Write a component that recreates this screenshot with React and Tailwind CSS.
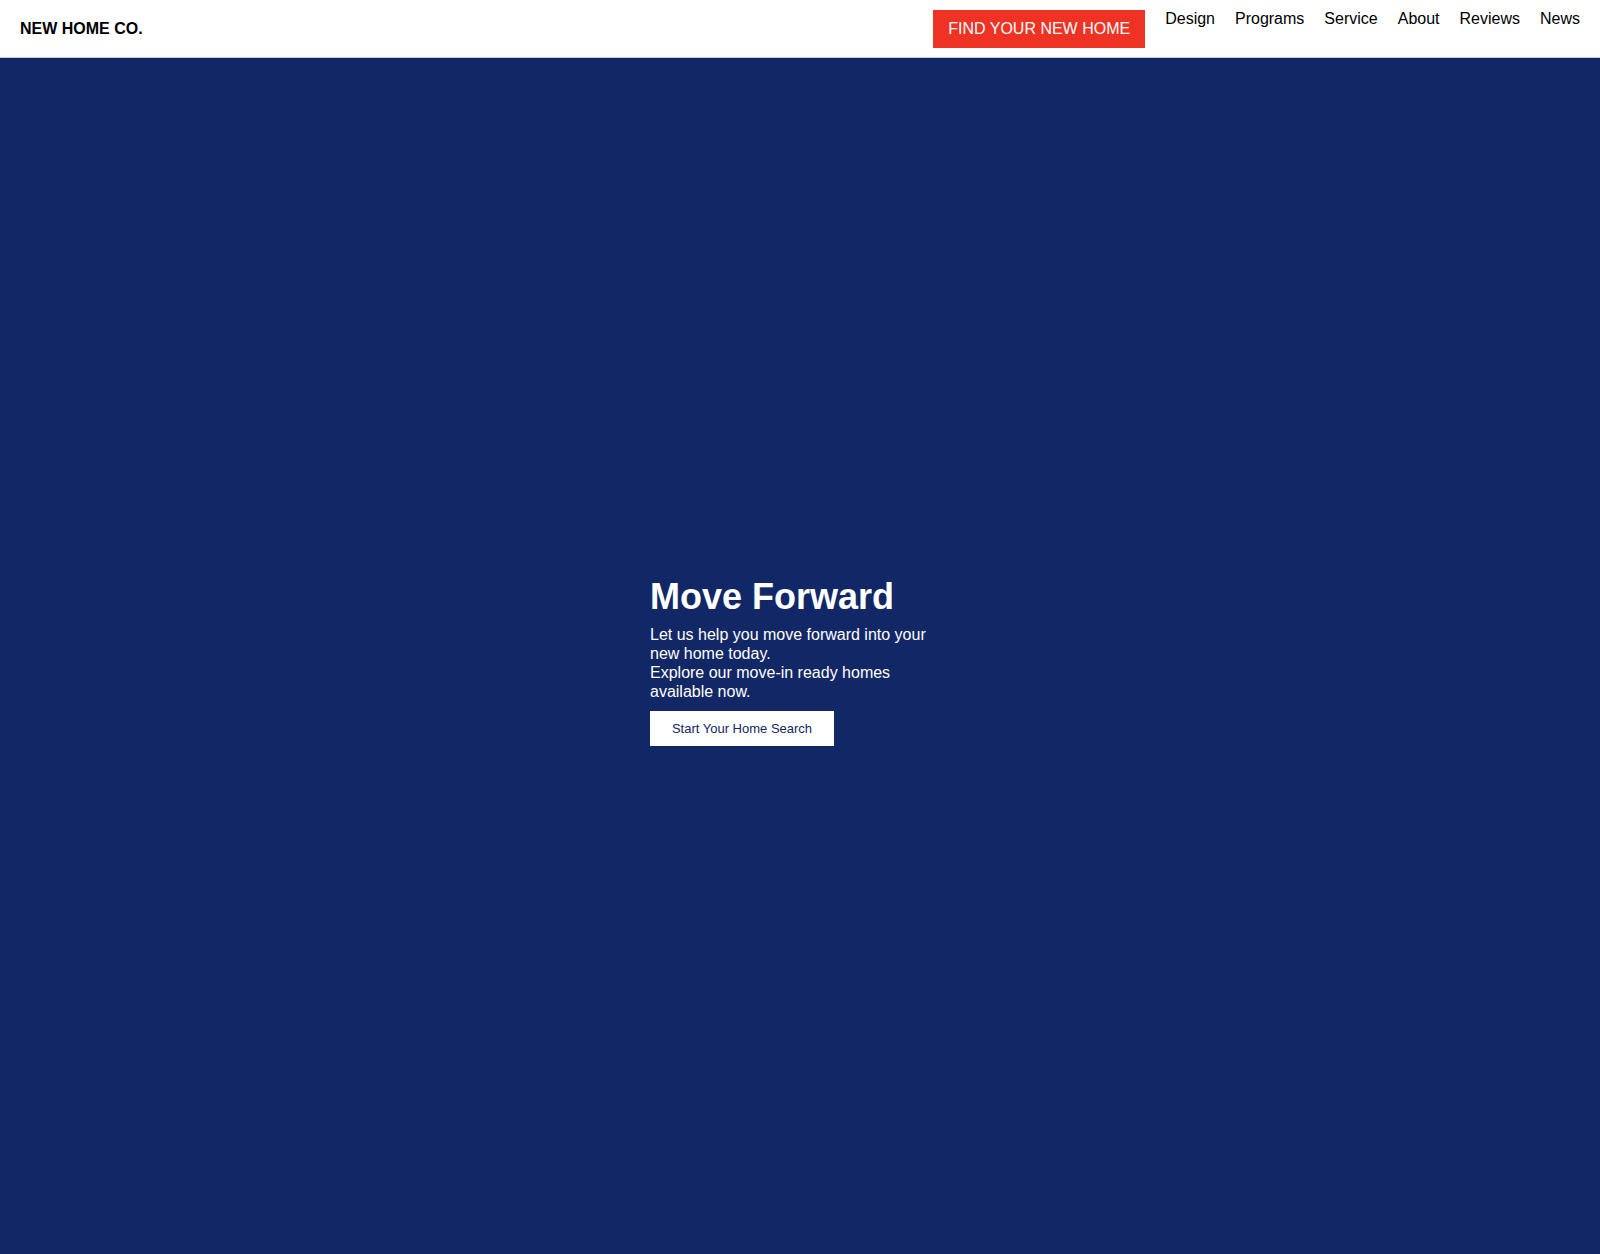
const navLinks = ['Design', 'Programs', 'Service', 'About', 'Reviews', 'News']

function Header() {
  return (
    <header className="h-[58px] flex items-center px-5 bg-white border-b border-[#c9ccd6]">
      <div className="text-base font-bold leading-[normal] text-black pt-px">NEW HOME CO.</div>
      <div className="ml-auto flex items-start gap-5">
        <a className="h-[38px] flex items-center px-[15px] bg-[#ee3224] text-white text-base leading-[normal]">
          FIND YOUR NEW HOME
        </a>
        <ul className="flex gap-5 text-base leading-[normal] text-black">
          {navLinks.map((l) => (
            <li key={l}>
              <a>{l}</a>
            </li>
          ))}
        </ul>
      </div>
    </header>
  )
}

function Hero() {
  return (
    <section className="h-[1196px] bg-[#122766] flex items-center justify-center pt-[10px]">
      <div className="w-[300px] flex flex-col items-start text-white">
        <h1 className="text-[36px] font-bold leading-[normal]">Move Forward</h1>
        <p className="mt-[7px] text-base leading-[1.2]">
          Let us help you move forward into your new home today.
          <br />
          Explore our move-in ready homes available now.
        </p>
        <button className="mt-[10px] w-[184px] h-[35px] bg-white text-[#122766] text-[13px] leading-[normal]">
          Start Your Home Search
        </button>
      </div>
    </section>
  )
}

export default function App() {
  return (
    <div className="min-h-screen bg-[#122766] font-['Liberation_Sans',Arial,sans-serif]">
      <Header />
      <Hero />
    </div>
  )
}
